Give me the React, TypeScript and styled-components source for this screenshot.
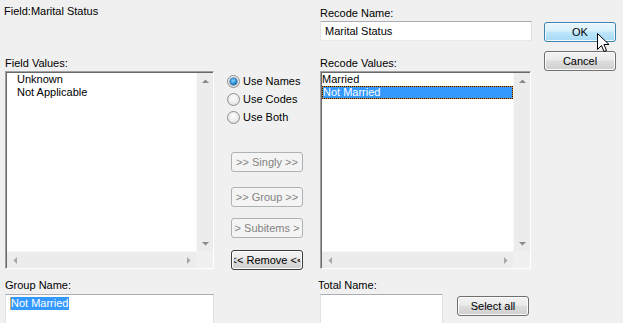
import React from "react";
import styled, { createGlobalStyle, css } from "styled-components";

const Global = createGlobalStyle`
  html, body { margin: 0; padding: 0; background: #f0f0f0; }
  body {
    font-family: "Liberation Sans", Arial, sans-serif;
    font-size: 11px;
    color: #000;
    overflow: hidden;
  }
  * { box-sizing: border-box; }
`;

const Dialog = styled.div`
  position: relative;
  width: 623px;
  height: 323px;
  overflow: hidden;
  padding-left: 5px;
  display: flex;
  flex-direction: column;
`;

const Section = styled.div<{ $h: number }>`
  flex: none;
  height: ${(p) => p.$h}px;
  display: grid;
  grid-template-columns: 210px 105px 212px 12px 72px;
`;

const Col = styled.div<{ $col: number; $pt?: number; $pl?: number }>`
  grid-column: ${(p) => p.$col};
  display: flex;
  flex-direction: column;
  padding-top: ${(p) => p.$pt ?? 0}px;
  padding-left: ${(p) => p.$pl ?? 0}px;
  min-width: 0;
`;

const Spacer = styled.div`
  flex: 1;
`;

const Label = styled.div<{ $ml?: number; $mb?: number }>`
  line-height: 13px;
  height: 13px;
  white-space: nowrap;
  margin-left: ${(p) => p.$ml ?? 0}px;
  margin-bottom: ${(p) => p.$mb ?? 0}px;
`;

const Field = styled.div<{ $w: number; $h: number; $mt?: number }>`
  flex: none;
  width: ${(p) => p.$w}px;
  height: ${(p) => p.$h}px;
  margin-top: ${(p) => p.$mt ?? 0}px;
  background: #fff;
  border: 1px solid;
  border-color: #abadb3 #dbdfe6 #e3e9ef #e2e3ea;
  padding: 2px 4px;
  line-height: 13px;
  white-space: nowrap;
  overflow: hidden;
  display: flex;
  align-items: flex-start;
`;

const FieldText = styled.span<{ $center?: boolean }>`
  line-height: 13px;
  padding-top: ${(p) => (p.$center ? 1 : 0)}px;
`;

const Caret = styled.span`
  display: inline-block;
  width: 1px;
  height: 13px;
  background: #d7a66a;
`;

const Highlight = styled.span`
  background: #3399ff;
  color: #fff;
  line-height: 13px;
  padding-right: 1px;
`;

type Variant = "normal" | "hover" | "disabled" | "focus";

const Btn = styled.button<{ $v: Variant; $mt?: number; $ml?: number }>`
  flex: none;
  width: 72px;
  height: 20px;
  margin: ${(p) => p.$mt ?? 0}px 0 0 ${(p) => p.$ml ?? 0}px;
  padding: 0 2px;
  font-family: inherit;
  font-size: 11px;
  border-radius: 3px;
  border: 1px solid #707070;
  color: #000;
  display: flex;
  align-items: center;
  justify-content: center;
  overflow: hidden;
  box-shadow: inset 0 0 0 1px #fbfbfb;
  background: linear-gradient(#f2f2f2 0%, #ebebeb 45%, #dddddd 50%, #cfcfcf 100%);
  ${(p) =>
    p.$v === "hover" &&
    css`
      border-color: #3c7fb1;
      box-shadow: inset 0 0 0 1px #f3fafe;
      background: linear-gradient(#eaf6fd 0%, #d9f0fc 45%, #bee6fd 50%, #a7d9f5 100%);
    `}
  ${(p) =>
    p.$v === "disabled" &&
    css`
      border-color: #adb2b5;
      box-shadow: none;
      background: #f4f4f4;
      color: #838383;
    `}
  ${(p) =>
    p.$v === "focus" &&
    css`
      border-color: #3d3d3d;
      box-shadow: inset 0 0 0 1px #fdfdfd;
    `}
`;

const BtnText = styled.span`
  flex: 1;
  min-width: 0;
  display: flex;
  justify-content: center;
  overflow: hidden;
  white-space: nowrap;
  line-height: 13px;
`;

const BtnInner = styled.span`
  flex: none;
`;

const ListFrame = styled.div<{ $w: number }>`
  flex: none;
  width: ${(p) => p.$w}px;
  height: 198px;
  border: 1px solid;
  border-color: #a0a0a0 #ffffff #ffffff #a0a0a0;
`;

const ListInner = styled.div`
  width: 100%;
  height: 100%;
  border-style: solid;
  border-width: 1px 0 0 1px;
  border-color: #696969;
  background: #fff;
  display: grid;
  grid-template-columns: 1fr 17px;
  grid-template-rows: 1fr 17px;
`;

const ListContent = styled.div<{ $pl: number }>`
  padding-left: ${(p) => p.$pl}px;
  overflow: hidden;
`;

const Item = styled.div<{ $sel?: boolean }>`
  height: 13px;
  line-height: 12px;
  white-space: nowrap;
  ${(p) =>
    p.$sel &&
    css`
      background: #3399ff;
      color: #fff;
      border: 1px solid #e08a2c;
      outline: 1px dotted #111;
      outline-offset: -1px;
      line-height: 11px;
    `}
`;

const VScroll = styled.div`
  background: #ececec;
  border-left: 1px solid #f8f8f8;
  display: flex;
  flex-direction: column;
  justify-content: space-between;
`;

const HScroll = styled.div`
  background: #ececec;
  border-top: 1px solid #f8f8f8;
  display: flex;
  justify-content: space-between;
`;

const Corner = styled.div`
  background: #f0f0f0;
`;

const ArrowBox = styled.div`
  width: 16px;
  height: 16px;
  display: flex;
  align-items: center;
  justify-content: center;
`;

const Arrow = ({ dir }: { dir: "up" | "down" | "left" | "right" }) => {
  const rot = { up: 0, down: 180, left: 270, right: 90 }[dir];
  const fill = dir === "up" || dir === "down" ? "#8a8a8a" : "#a6a6a6";
  return (
    <ArrowBox>
      <svg width="7" height="7" viewBox="0 0 7 7" style={{ transform: `rotate(${rot}deg)` }}>
        <path d="M0 5 L3.5 1.5 L7 5 Z" fill={fill} />
      </svg>
    </ArrowBox>
  );
};

const ListBox = ({
  w,
  pl,
  children,
}: {
  w: number;
  pl: number;
  children: React.ReactNode;
}) => (
  <ListFrame $w={w}>
    <ListInner>
      <ListContent $pl={pl}>{children}</ListContent>
      <VScroll>
        <Arrow dir="up" />
        <Arrow dir="down" />
      </VScroll>
      <HScroll>
        <Arrow dir="left" />
        <Arrow dir="right" />
      </HScroll>
      <Corner />
    </ListInner>
  </ListFrame>
);

const RadioRow = styled.label`
  height: 18px;
  display: flex;
  align-items: center;
  gap: 3px;
  white-space: nowrap;
`;

const RadioCircle = styled.span<{ $on?: boolean }>`
  flex: none;
  width: 13px;
  height: 13px;
  border-radius: 50%;
  border: 1px solid #8e8f8f;
  background: radial-gradient(circle at 50% 40%, #fdfdfd 0%, #ececec 55%, #d2d2d2 100%);
  display: flex;
  align-items: center;
  justify-content: center;
  &::after {
    content: "";
    display: ${(p) => (p.$on ? "block" : "none")};
    width: 7px;
    height: 7px;
    border-radius: 50%;
    background: radial-gradient(circle at 45% 40%, #8ee0ff 0%, #2a8ad4 50%, #0f3f80 100%);
    box-shadow: 0 0 0 0.5px #1b4f8a;
  }
`;

const Radio = ({ on, children }: { on?: boolean; children: React.ReactNode }) => (
  <RadioRow>
    <RadioCircle $on={on} />
    {children}
  </RadioRow>
);

const Middle = styled.div`
  grid-column: 2;
  display: flex;
  flex-direction: column;
  padding-top: 1px;
  padding-left: 12px;
`;

const ButtonStack = styled.div`
  display: flex;
  flex-direction: column;
  padding-left: 4px;
`;

const Row = styled.div`
  display: flex;
  align-items: flex-start;
`;

const CursorWrap = styled.div`
  position: absolute;
  left: 597px;
  top: 33px;
  width: 13px;
  height: 20px;
  pointer-events: none;
`;

const Cursor = () => (
  <CursorWrap>
    <svg width="13" height="20" viewBox="0 0 13 20">
      <path
        d="M0.5 0.5 L0.5 16.5 L4.5 12.5 L7 18.5 L9.5 17.5 L7 11.5 L12 11.5 Z"
        fill="#fff"
        stroke="#000"
        strokeWidth="1"
        strokeLinejoin="miter"
      />
    </svg>
  </CursorWrap>
);

const Title = styled(Label)`
  margin-left: -1px;
`;

export default function App() {
  return (
    <>
      <Global />
      <Dialog>
        <Section $h={71}>
          <Col $col={1} $pt={5}>
            <Title>Field:Marital Status</Title>
            <Spacer />
            <Label $mb={1}>Field Values:</Label>
          </Col>
          <Col $col={3} $pt={7}>
            <Label>Recode Name:</Label>
            <Field $w={212} $h={20} $mt={1}>
              <FieldText $center>Marital Status</FieldText>
            </Field>
            <Spacer />
            <Label $mb={1}>Recode Values:</Label>
          </Col>
          <Col $col={5} $pt={22}>
            <Btn $v="hover">
              <BtnText>
                <BtnInner>OK</BtnInner>
              </BtnText>
            </Btn>
            <Btn $v="normal" $mt={9}>
              <BtnText>
                <BtnInner>Cancel</BtnInner>
              </BtnText>
            </Btn>
          </Col>
        </Section>

        <Section $h={198}>
          <Col $col={1}>
            <ListBox w={209} pl={10}>
              <Item>Unknown</Item>
              <Item>Not Applicable</Item>
            </ListBox>
          </Col>
          <Middle>
            <Radio on>Use Names</Radio>
            <Radio>Use Codes</Radio>
            <Radio>Use Both</Radio>
            <ButtonStack>
              <Btn $v="disabled" $mt={26}>
                <BtnText>
                  <BtnInner>&gt;&gt; Singly &gt;&gt;</BtnInner>
                </BtnText>
              </Btn>
              <Btn $v="disabled" $mt={15}>
                <BtnText>
                  <BtnInner>&gt;&gt; Group &gt;&gt;</BtnInner>
                </BtnText>
              </Btn>
              <Btn $v="disabled" $mt={11}>
                <BtnText>
                  <BtnInner>&gt;&gt; Subitems &gt;&gt;</BtnInner>
                </BtnText>
              </Btn>
              <Btn $v="focus" $mt={12}>
                <BtnText>
                  <BtnInner>&lt;&lt; Remove &lt;&lt;</BtnInner>
                </BtnText>
              </Btn>
            </ButtonStack>
          </Middle>
          <Col $col={3}>
            <ListBox w={211} pl={0}>
              <Item>Married</Item>
              <Item $sel>Not Married</Item>
            </ListBox>
          </Col>
        </Section>

        <Section $h={54}>
          <Col $col={1} $pt={10}>
            <Label>Group Name:</Label>
            <Field $w={209} $h={40} $mt={2}>
              <Caret />
              <Highlight>Not Married</Highlight>
            </Field>
          </Col>
          <Col $col={3} $pt={10}>
            <Label $ml={-2}>Total Name:</Label>
            <Row>
              <Field $w={123} $h={40} $mt={2} />
              <Btn $v="normal" $mt={4} $ml={14}>
                <BtnText>
                  <BtnInner>Select all</BtnInner>
                </BtnText>
              </Btn>
            </Row>
          </Col>
        </Section>

        <Cursor />
      </Dialog>
    </>
  );
}
